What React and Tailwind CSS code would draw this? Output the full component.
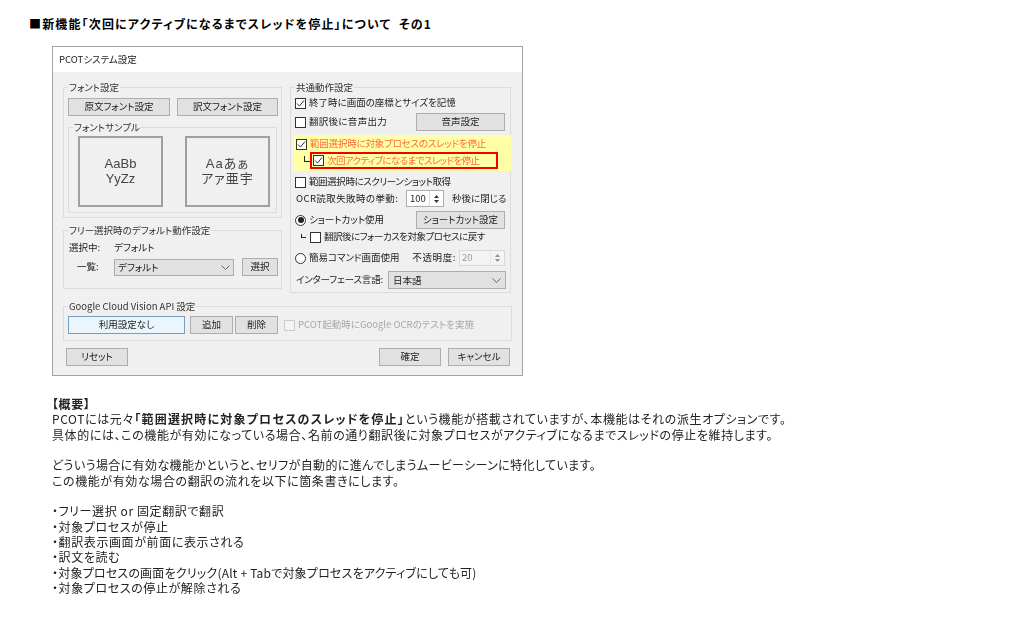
const ui = '[font-family:"Noto_Sans_CJK_JP",sans-serif]';

const Btn = ({ className = "", children }) => (
  <div
    className={`flex items-center justify-center shrink-0 h-[18px] border border-[#adadad] bg-[#e1e1e1] text-[9.5px] leading-none text-[#222] whitespace-nowrap ${className}`}
  >
    {children}
  </div>
);

const Check = ({ checked, disabled }) => (
  <span
    className={`shrink-0 flex items-center justify-center w-[11px] h-[11px] border ${
      disabled ? "border-[#ccc] bg-[#f4f4f4]" : "border-[#333] bg-white"
    }`}
  >
    {checked && (
      <svg width="9" height="9" viewBox="0 0 9 9" fill="none" stroke="#333" strokeWidth="1">
        <path d="M1 4.5 L3.5 7 L8 1.5" />
      </svg>
    )}
  </span>
);

const Radio = ({ checked }) => (
  <span className="shrink-0 flex items-center justify-center w-[11px] h-[11px] rounded-full border border-[#333] bg-white">
    {checked && <span className="w-[6px] h-[6px] rounded-full bg-[#222]" />}
  </span>
);

const Chevron = () => (
  <svg width="9" height="5" viewBox="0 0 9 5" fill="none" stroke="#666" strokeWidth="1">
    <path d="M0.5 0.5 L4.5 4.5 L8.5 0.5" />
  </svg>
);

const Spin = ({ faded }) => (
  <span className={`flex flex-col items-center justify-center gap-[2px] w-[14px] h-full border-l border-[#ddd] ${faded ? "opacity-50" : ""}`}>
    <svg width="5" height="3" viewBox="0 0 5 3"><path d="M2.5 0 L5 3 L0 3 Z" fill="#333" /></svg>
    <svg width="5" height="3" viewBox="0 0 5 3"><path d="M0 0 L5 0 L2.5 3 Z" fill="#333" /></svg>
  </span>
);

const Group = ({ title, className = "", legend = "", children }) => (
  <fieldset className={`border border-[#dcdcdc] min-w-0 ${className}`}>
    <legend className={`px-[1px] text-[9.5px] leading-[12px] text-[#333] whitespace-nowrap ${legend}`}>{title}</legend>
    {children}
  </fieldset>
);

const Row = ({ className = "", children }) => (
  <div className={`flex items-center text-[9.5px] leading-none text-[#222] whitespace-nowrap ${className}`}>{children}</div>
);

const Sample = ({ first, second, className }) => (
  <div className={`flex flex-col items-center justify-center w-[85px] h-[71px] border-2 border-[#a0a0a0] [font-family:"Liberation_Sans","Noto_Sans_CJK_JP",sans-serif] leading-[14.5px] text-[#444] ${className}`}>
    <span>{first}</span>
    <span>{second}</span>
  </div>
);

const Dialog = () => (
  <div className="ml-[52px] mt-[15px] w-[471px] h-[330px] border border-[#a3a3a3] bg-[#f0f0f0] flex flex-col [font-feature-settings:'palt'] blur-[0.4px]">
    <div className="h-[25px] shrink-0 bg-white flex items-center pl-[6px] pb-[1px] text-[9.5px] text-[#222]">PCOTシステム設定</div>

    <div className="flex pl-[10px] pt-[9px] gap-[8px]">
      {/* left column */}
      <div className="w-[219px] shrink-0 flex flex-col gap-[6px]">
        <Group title="フォント設定" className="h-[137px] px-[4px] pt-[5px]">
          <div className="flex gap-[7px]">
            <Btn className="w-[102px]">原文フォント設定</Btn>
            <Btn className="w-[101px]">訳文フォント設定</Btn>
          </div>
          <Group title="フォントサンプル" legend="-ml-[5px]" className="mt-[5px] w-[209px] h-[92px] pl-[9px] pt-[3px]">
            <div className="flex gap-[22px]">
              <Sample first="AaBb" second="YyZz" className="text-[13px]" />
              <Sample first="Aaあぁ" second="アァ亜宇" className="text-[13px] tracking-[1px]" />
            </div>
          </Group>
        </Group>

        <Group title="フリー選択時のデフォルト動作設定" legend="-ml-[1px]" className="h-[65px] pl-[5px] pr-[3px] pt-[5px]">
          <Row className="h-[14px]">
            <span className="w-[45px]">選択中:</span>
            <span>デフォルト</span>
          </Row>
          <div className="flex items-center mt-[3px] h-[18px]">
            <Row className="w-[45px] shrink-0 pl-[8px]">一覧:</Row>
            <div className="w-[120px] shrink-0 h-[17px] border border-[#adadad] bg-[#e1e1e1] flex items-center justify-between px-[3px] text-[9.5px] text-[#222]">
              <span>デフォルト</span>
              <Chevron />
            </div>
            <Btn className="ml-[8px] w-[36px]">選択</Btn>
          </div>
        </Group>
      </div>

      {/* right column */}
      <Group title="共通動作設定" legend="ml-[3px]" className="w-[221px] shrink-0 h-[212px] px-[1px] pt-[3px]">
        <Row className="h-[14px] ml-[3px] gap-[3px]">
          <Check checked />
          <span>終了時に画面の座標とサイズを記憶</span>
        </Row>
        <div className="flex items-center justify-between h-[18px] mt-[3px] ml-[3px] mr-[4px]">
          <Row className="gap-[3px]">
            <Check />
            <span className="tracking-[0.3px]">翻訳後に音声出力</span>
          </Row>
          <Btn className="w-[89px]">音声設定</Btn>
        </div>

        <div className="mt-[4px] h-[36px] ml-[1px] w-[218px] bg-[#ffffa6] pt-[2px]">
          <Row className="h-[14px] ml-[3px] gap-[3px] !text-[#ff6a3c]">
            <Check checked />
            <span className="tracking-[-0.2px]">範囲選択時に対象プロセスのスレッドを停止</span>
          </Row>
          <div className="flex items-center mt-[1px] ml-[11px]">
            <span className="w-[6px] h-[6px] mb-[4px] border-l border-b border-[#222]" />
            <Row className="w-[188px] h-[17px] border-2 border-[#f00000] pl-[1px] gap-[3px] !text-[#ff6a3c]">
              <Check checked />
              <span className="tracking-[-0.6px]">次回アクティブになるまでスレッドを停止</span>
            </Row>
          </div>
        </div>

        <Row className="h-[14px] mt-[4px] ml-[3px] gap-[3px]">
          <Check />
          <span className="tracking-[-0.4px]">範囲選択時にスクリーンショット取得</span>
        </Row>
        <Row className="h-[17px] mt-[1px] ml-[4px]">
          <span className="w-[110px] tracking-[0.4px]">OCR読取失敗時の挙動:</span>
          <div className="w-[38px] h-[17px] border border-[#adadad] bg-white flex items-center justify-between pl-[3px]">
            <span>100</span>
            <Spin />
          </div>
          <span className="ml-[8px]">秒後に閉じる</span>
        </Row>
        <div className="flex items-center justify-between h-[18px] mt-[4px] ml-[3px] mr-[4px]">
          <Row className="gap-[3px]">
            <Radio checked />
            <span>ショートカット使用</span>
          </Row>
          <Btn className="w-[89px]">ショートカット設定</Btn>
        </div>
        <Row className="h-[14px] mt-[1px] ml-[9px]">
          <span className="w-[5px] h-[4px] mb-[3px] border-l border-b border-[#222]" />
          <span className="ml-[4px] mr-[3px]"><Check /></span>
          <span className="tracking-[-0.5px]">翻訳後にフォーカスを対象プロセスに戻す</span>
        </Row>
        <div className="flex items-center justify-between h-[16px] mt-[6px] ml-[3px] mr-[4px]">
          <Row className="gap-[3px]">
            <Radio />
            <span>簡易コマンド画面使用</span>
          </Row>
          <Row className="gap-[3px]">
            <span className="tracking-[0.6px]">不透明度:</span>
            <div className="w-[46px] h-[16px] border border-[#d9d9d9] bg-[#f4f4f4] flex items-center justify-between pl-[2px] text-[#999]">
              <span>20</span>
              <Spin faded />
            </div>
          </Row>
        </div>
        <div className="flex items-center h-[18px] mt-[5px] ml-[4px]">
          <Row className="w-[92px] tracking-[-0.15px]">インターフェース言語:</Row>
          <div className="w-[118px] h-[18px] border border-[#adadad] bg-[#e1e1e1] flex items-center justify-between px-[4px] text-[9.5px] text-[#222]">
            <span>日本語</span>
            <Chevron />
          </div>
        </div>
      </Group>
    </div>

    <Group title="Google Cloud Vision API 設定" className="ml-[10px] mt-[7px] w-[449px] h-[41px] px-[4px] pt-[4px]">
      <div className="flex items-center">
        <Btn className="w-[117px] !border-[#7a9cc0] !bg-[#eaf6fd]">利用設定なし</Btn>
        <Btn className="ml-[5px] w-[43px]">追加</Btn>
        <Btn className="ml-[2px] w-[43px]">削除</Btn>
        <Row className="ml-[6px] gap-[3px] !text-[#a8a8a8]">
          <Check disabled />
          <span>PCOT起動時にGoogle OCRのテストを実施</span>
        </Row>
      </div>
    </Group>

    <div className="flex items-center mt-[7px] ml-[13px] mr-[12px]">
      <Btn className="w-[62px]">リセット</Btn>
      <Btn className="w-[62px] ml-auto">確定</Btn>
      <Btn className="w-[62px] ml-[7px]">キャンセル</Btn>
    </div>
  </div>
);

const lines = [
  { text: <b>【概要】</b> },
  { text: <span>PCOTには元々<b className="tracking-[1.2px]">「範囲選択時に対象プロセスのスレッドを停止」</b>という機能が搭載されていますが、本機能はそれの派生オプションです。</span> },
  { text: "具体的には、この機能が有効になっている場合、名前の通り翻訳後に対象プロセスがアクティブになるまでスレッドの停止を維持します。" },
  { text: "" },
  { text: "どういう場合に有効な機能かというと、セリフが自動的に進んでしまうムービーシーンに特化しています。", cls: "tracking-[0.38px]" },
  { text: "この機能が有効な場合の翻訳の流れを以下に箇条書きにします。" },
  { text: "" },
  { text: "・フリー選択 or 固定翻訳で翻訳" },
  { text: "・対象プロセスが停止" },
  { text: "・翻訳表示画面が前面に表示される" },
  { text: "・訳文を読む" },
  { text: "・対象プロセスの画面をクリック(Alt + Tabで対象プロセスをアクティブにしても可)", cls: "tracking-[0.2px]" },
  { text: "・対象プロセスの停止が解除される" },
];

export default function App() {
  return (
    <div className={`w-[1024px] h-[641px] overflow-hidden bg-white pt-[16px] ${ui}`}>
      <h1 className="ml-[29px] text-[12px] leading-[15px] font-bold text-black [font-feature-settings:'palt'] tracking-[1.15px] whitespace-pre">
        ■新機能「次回にアクティブになるまでスレッドを停止」について  その1
      </h1>
      <Dialog />
      <div className="mt-[20px] ml-[52px] text-[12px] leading-[15.33px] text-[#222] [font-feature-settings:'palt'] tracking-[0.6px] blur-[0.2px]">
        {lines.map((line, i) => (
          <div key={i} className={`h-[15.33px] whitespace-nowrap ${line.cls || ""}`}>{line.text}</div>
        ))}
      </div>
    </div>
  );
}
